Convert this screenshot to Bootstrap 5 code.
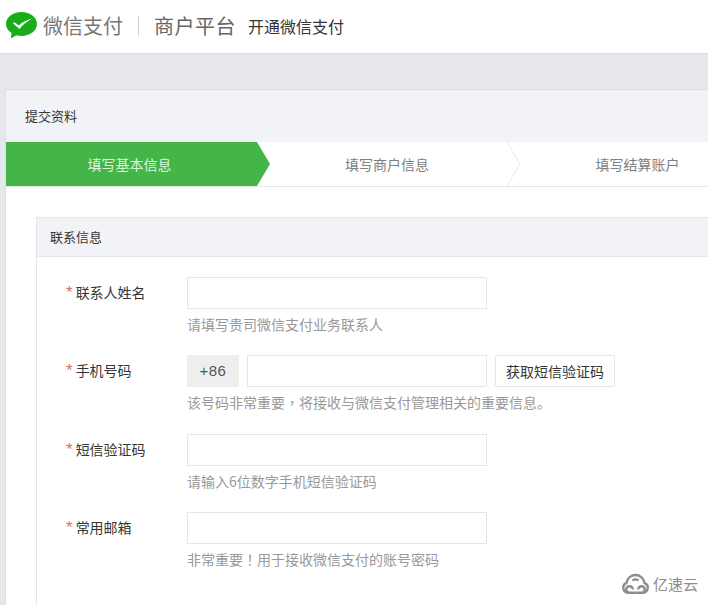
<!DOCTYPE html>
<html lang="zh-CN">
<head>
    <meta charset="UTF-8">
    <meta name="viewport" content="width=device-width, initial-scale=1.0">
    <title>微信支付商户平台</title>
    <link href="https://cdn.jsdelivr.net/npm/bootstrap@5.3.3/dist/css/bootstrap.min.css" rel="stylesheet">
    <style>
        html, body { height: 605px; overflow: hidden; }
        body {
            background: #e6e8eb;
            font-family: "Noto Sans CJK SC", "Liberation Sans", sans-serif;
            font-size: 14px;
            color: #353535;
            position: relative;
        }
        .top-head { height: 54px; background: #fff; border-bottom: 1px solid #dcdee1; padding: 0 0 2px 6px; }
        .logo-text { font-size: 20px; color: #777; margin-left: 6px; }
        .logo-sep { width: 1px; height: 20px; background: #d4d4d4; margin: 0 15px; }
        .plat-text { font-size: 20px; color: #666; letter-spacing: .5px; }
        .open-text { font-size: 16px; color: #353535; margin-left: 12px; }
        .main-panel { margin: 35px 0 0 5px; background: #fff; border: 1px solid #dcdee1; border-width: 1px 0 0 1px; height: 516px; }
        .panel-title { height: 52px; background: #f2f3f7; padding-left: 19px; font-size: 13px; }
        .step-bar { height: 45px; border-bottom: 1px solid #e4e6e9; background: #fff; }
        .step-item { height: 44px; position: relative; color: #808080; font-size: 14px; flex: none; padding-right: 4px; }
        .step-one { width: 251px; background: #43b549; color: #dff5df; }
        .step-two { width: 236px; margin-left: 14px; }
        .step-three { flex: 1; margin-left: 14px; padding: 0 0 0 46px; }
        .step-tip { position: absolute; top: 0; left: 100%; width: 14px; height: 44px; }
        .info-box { margin: 30px 0 0 30px; border: 1px solid #e4e6e9; border-width: 1px 0 0 1px; height: 400px; }
        .info-head { height: 39px; background: #f2f3f7; border-bottom: 1px solid #e4e6e9; padding-left: 13px; font-size: 13px; color: #353535; }
        .info-body { padding-top: 20px; }
        .form-line { display: flex; height: 78.4px; }
        .field-label { width: 150px; padding-left: 29px; height: 32px; line-height: 30px; font-size: 14px; color: #353535; flex: none; }
        .req-star { color: #dc6f6c; margin-right: 3px; font-size: 17px; line-height: 1; font-family: "Liberation Sans", sans-serif; }
        .field-input { height: 32px; width: 300px; border: 1px solid #e4e6e9; border-radius: 0; padding: 0 8px; box-shadow: none; }
        .code-box { width: 52px; height: 32px; background: #eeeeee; color: #555; font-size: 15px; letter-spacing: .5px; font-family: "Liberation Sans", sans-serif; }
        .phone-input { width: 240px; }
        .code-btn { height: 32px; width: 120px; padding: 0; border: 1px solid #e4e6e9; border-radius: 2px; background: #fff; color: #353535; font-size: 14px; }
        .help-text { font-size: 14px; line-height: 20px; margin-top: 5px; color: #999; white-space: nowrap; }
        .mid-punct { font-family: "Noto Sans CJK TC", sans-serif; }
        .water-mark { position: absolute; left: 622px; top: 573px; color: #8a8d92; font-size: 15px; line-height: 22px; }
    </style>
</head>
<body>

    <div class="top-head d-flex align-items-center">
        <svg width="31" height="27" viewBox="0 0 31 27">
            <path d="M15.5 0C7 0 0 5.4 0 12c0 3.7 2.1 6.900 5.600 9.100L4.800 26.500 10.500 23.300C12.100 23.800 13.800 24 15.500 24 24 24 31 18.600 31 12S24 0 15.500 0z" fill="#1aad19"/>
            <path d="M7 11.500l1.500-1.300 4.300 3.200C16 10.500 20 8.300 26 6.500c-4.500 2.800-9 6-12.500 10.500z" fill="#fff"/>
        </svg>
        <span class="logo-text">微信支付</span>
        <span class="logo-sep"></span>
        <span class="plat-text">商户平台</span>
        <span class="open-text">开通微信支付</span>
    </div>

    <div class="main-panel">
        <div class="panel-title d-flex align-items-center">提交资料</div>

        <div class="step-bar d-flex">
            <div class="step-item step-one d-flex align-items-center justify-content-center">
                填写基本信息
                <svg class="step-tip" viewBox="0 0 14 44"><path d="M0 0L13 22 0 44z" fill="#43b549"/></svg>
            </div>
            <div class="step-item step-two d-flex align-items-center justify-content-center">
                填写商户信息
                <svg class="step-tip" viewBox="0 0 14 44"><path d="M0 0L13 22 0 44" fill="none" stroke="#e8e9ec"/></svg>
            </div>
            <div class="step-item step-three d-flex align-items-center justify-content-center">填写结算账户</div>
        </div>

        <div class="info-box">
            <div class="info-head d-flex align-items-center">联系信息</div>
            <div class="info-body">
                <div class="form-line">
                    <div class="field-label"><span class="req-star">*</span>联系人姓名</div>
                    <div>
                        <input type="text" class="form-control field-input">
                        <div class="help-text">请填写贵司微信支付业务联系人</div>
                    </div>
                </div>
                <div class="form-line">
                    <div class="field-label"><span class="req-star">*</span>手机号码</div>
                    <div>
                        <div class="d-flex">
                            <div class="code-box d-flex align-items-center justify-content-center">+86</div>
                            <input type="text" class="form-control field-input phone-input ms-2">
                            <button type="button" class="btn code-btn ms-2">获取短信验证码</button>
                        </div>
                        <div class="help-text">该号码非常重要<span class="mid-punct" lang="zh-TW">，</span>将接收与微信支付管理相关的重要信息。</div>
                    </div>
                </div>
                <div class="form-line">
                    <div class="field-label"><span class="req-star">*</span>短信验证码</div>
                    <div>
                        <input type="text" class="form-control field-input">
                        <div class="help-text">请输入6位数字手机短信验证码</div>
                    </div>
                </div>
                <div class="form-line">
                    <div class="field-label"><span class="req-star">*</span>常用邮箱</div>
                    <div>
                        <input type="text" class="form-control field-input">
                        <div class="help-text">非常重要<span class="mid-punct" lang="zh-TW">！</span>用于接收微信支付的账号密码</div>
                    </div>
                </div>
            </div>
        </div>
    </div>

    <div class="water-mark d-flex align-items-center">
        <svg width="27" height="22" viewBox="0 0 27 22" fill="none" stroke="#8a8d92" stroke-width="2.400">
            <path d="M6.500 19.800H6a5.200 5.200 0 0 1-1.500-10C5.500 5 9.200 2 13.500 2s8 3 9 7.800a5.200 5.200 0 0 1-1.500 10h-.5"/>
            <path d="M10.500 7.500c2-1.500 4-1.500 6 0"/>
            <path d="M13.500 19.800H7.500a3.300 3.300 0 1 1 3.300-3.300"/>
            <path d="M13.500 19.800h6a3.300 3.300 0 1 0-3.300-3.300"/>
        </svg>
        <span class="ms-1">亿速云</span>
    </div>

    <script src="https://cdn.jsdelivr.net/npm/bootstrap@5.3.3/dist/js/bootstrap.bundle.min.js"></script>
</body>
</html>
